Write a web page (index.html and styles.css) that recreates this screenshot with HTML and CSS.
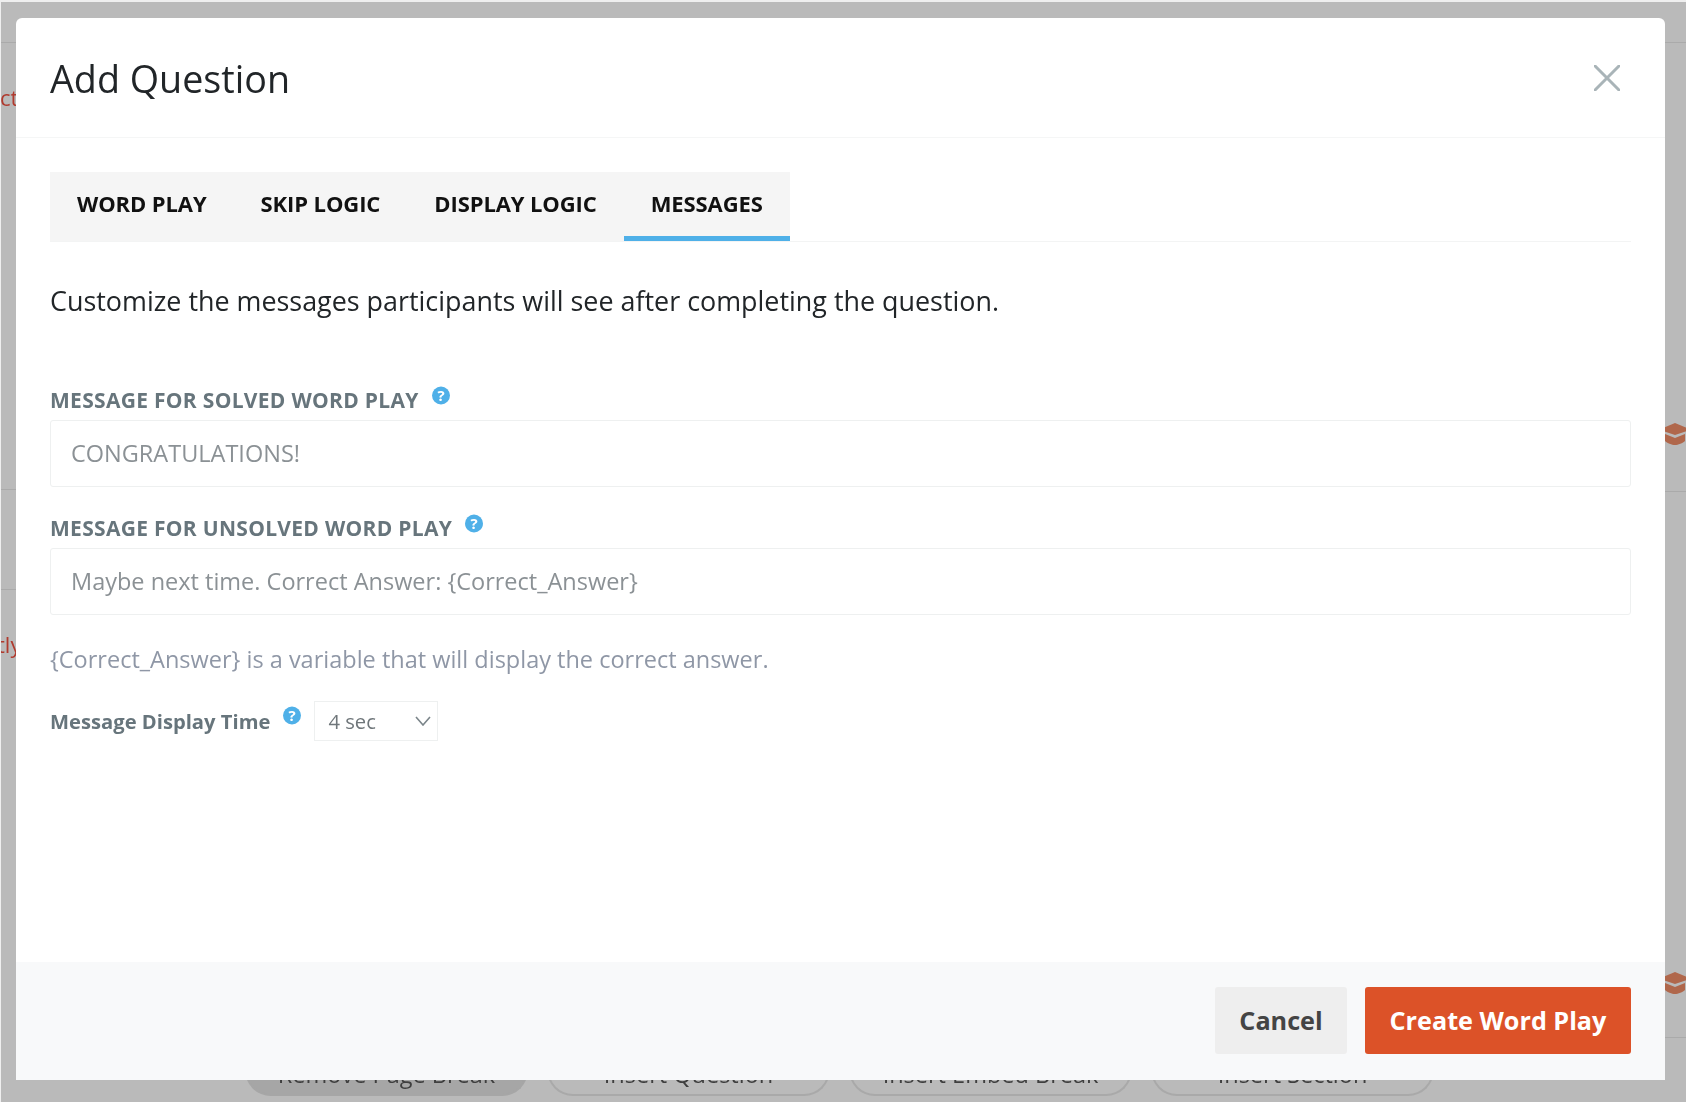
FILE: index.html
```html
<!DOCTYPE html>
<html lang="en">
<head>
<meta charset="utf-8">
<title>Add Question</title>
<link rel="stylesheet" href="styles.css">
</head>
<body>
<div class="backdrop">
  <span class="rule rule-top"></span>
  <span class="rule rule-left-a"></span>
  <span class="rule rule-left-b"></span>
  <span class="rule rule-right-a"></span>
  <span class="rule rule-right-b"></span>
  <span class="rule rule-right-c"></span>
  <span class="peek peek-a">ct</span>
  <span class="peek peek-b">tly</span>
  <svg class="cap cap-a" viewBox="0 0 24 22"><path d="M12 0 24 5v3L12 12 0 8V5z"/><path d="M2 11l10 4 10-4v7c-2 2-7 4-10 4s-8-2-10-4z"/></svg>
  <svg class="cap cap-b" viewBox="0 0 24 22"><path d="M12 0 24 5v3L12 12 0 8V5z"/><path d="M2 11l10 4 10-4v7c-2 2-7 4-10 4s-8-2-10-4z"/></svg>
  <div class="page-actions">
    <span class="page-btn is-dark">Remove Page Break</span>
    <span class="page-btn">Insert Question</span>
    <span class="page-btn">Insert Embed Break</span>
    <span class="page-btn">Insert Section</span>
  </div>
</div>

<div class="modal">
  <header class="modal-head">
    <h1 class="modal-title">Add Question</h1>
    <svg class="close" viewBox="0 0 26 26"><path d="M1 1 25 25M25 1 1 25"/></svg>
  </header>
  <main class="modal-body">
    <nav class="tabs-line">
      <div class="tabs">
        <span class="tab">WORD PLAY</span>
        <span class="tab">SKIP LOGIC</span>
        <span class="tab">DISPLAY LOGIC</span>
        <span class="tab is-active">MESSAGES</span>
      </div>
    </nav>
    <p class="intro">Customize the messages participants will see after completing the question.</p>
    <div class="field field-first">
      <div class="field-label">MESSAGE FOR SOLVED WORD PLAY
        <svg class="help" viewBox="0 0 18 18"><circle cx="9" cy="9" r="9"/><text x="9" y="14.2">?</text></svg>
      </div>
      <div class="input">CONGRATULATIONS!</div>
    </div>
    <div class="field">
      <div class="field-label">MESSAGE FOR UNSOLVED WORD PLAY
        <svg class="help" viewBox="0 0 18 18"><circle cx="9" cy="9" r="9"/><text x="9" y="14.2">?</text></svg>
      </div>
      <div class="input">Maybe next time. Correct Answer: {Correct_Answer}</div>
    </div>
    <p class="hint">{Correct_Answer} is a variable that will display the correct answer.</p>
    <div class="time-row">
      <span class="time-label">Message Display Time</span>
      <svg class="help help-time" viewBox="0 0 18 18"><circle cx="9" cy="9" r="9"/><text x="9" y="14.2">?</text></svg>
      <div class="select">4 sec
        <svg class="chevron" viewBox="0 0 16 10"><path d="M1 1 8 9 15 1"/></svg>
      </div>
    </div>
  </main>
  <footer class="modal-foot">
    <button class="btn btn-cancel" type="button">Cancel</button>
    <button class="btn btn-create" type="button">Create Word Play</button>
  </footer>
</div>
</body>
</html>
```
FILE: styles.css
```css
* { box-sizing: border-box; }
html, body { margin: 0; height: 100%; }
body {
  position: relative;
  width: 1686px;
  height: 1102px;
  overflow: hidden;
  background: #bababa;
  font-family: "Open Sans", "Liberation Sans", sans-serif;
  border-top: 2px solid #efefef;
  border-left: 1px solid #efefef;
}

/* Dimmed page behind the dialog */
.backdrop { position: absolute; inset: 0; filter: blur(0.5px); }
.rule { position: absolute; height: 1px; background: #aaaaaa; }
.rule-top { left: 0; width: 16px; top: 40px; }
.rule-left-a { left: 0; width: 16px; top: 487px; }
.rule-left-b { left: 0; width: 16px; top: 587px; }
.rule-right-a { left: 1664px; right: 0; top: 40px; }
.rule-right-b { left: 1664px; right: 0; top: 489px; }
.rule-right-c { left: 1664px; right: 0; top: 1035px; }
.peek { position: absolute; color: #b03a2e; font-size: 22px; line-height: 30px; }
.peek-a { left: -1px; top: 80px; }
.peek-b { left: -4px; top: 627px; }
.cap { position: absolute; left: 1662px; width: 24px; height: 22px; fill: #b0674b; }
.cap-a { top: 421px; }
.cap-b { top: 970px; }
.page-actions {
  position: absolute;
  left: 244px;
  top: 1040px;
  display: flex;
  gap: 19px;
}
.page-btn {
  width: 283px;
  height: 54px;
  padding-top: 15px;
  border: 2px solid #a9a9a9;
  border-radius: 0 0 26px 26px;
  border-top: 0;
  color: #3f3f3f;
  font-size: 23.5px;
  line-height: 34px;
  text-align: center;
}
.is-dark { background: #a6a6a6; border-color: #a6a6a6; }

/* Dialog */
.modal {
  position: absolute;
  left: 15px;
  top: 16px;
  width: 1649px;
  height: 1062px;
  display: flex;
  flex-direction: column;
  background: #fff;
  border-radius: 6px 6px 0 0;
  overflow: hidden;
  filter: blur(0.4px);
}
.modal-head {
  height: 120px;
  flex: none;
  display: flex;
  align-items: center;
  justify-content: space-between;
  padding: 0 45px 0 34px;
  border-bottom: 1px solid #f5f6f6;
}
.modal-title { margin: 0; padding-top: 2px; font-size: 37.7px; font-weight: 400; color: #212528; line-height: 48px; }
.close { width: 26px; height: 26px; fill: none; stroke: #a9b4b8; stroke-width: 3; stroke-linecap: round; }

.modal-body { flex: 1; padding: 34px 34px 0 34px; }
.tabs-line { border-bottom: 1px solid #f3f4f4; }
.tabs { display: inline-flex; background: #f5f5f5; height: 69px; vertical-align: top; }
.tab {
  padding: 0 27px;
  color: #111;
  font-size: 22px;
  font-weight: 700;
  line-height: 62px;
  letter-spacing: -0.1px;
  border-bottom: 5px solid transparent;
}
.is-active { border-bottom-color: #4fb0e8; }
.intro { margin: 37px 0 0; color: #212528; font-size: 26.9px; line-height: 44px; }

.field { margin-top: 19px; }
.field-first { margin-top: 55px; }
.field-label {
  display: flex;
  align-items: flex-start;
  height: 42px;
  padding-top: 8px;
  color: #67757c;
  font-size: 21px;
  font-weight: 700;
  line-height: 29px;
  letter-spacing: 0.3px;
}
.help { width: 18px; height: 19px; flex: none; margin: 0 0 0 13px; }
.help circle { fill: #4fb0e8; }
.help text { fill: #fff; font-size: 15px; font-weight: 700; text-anchor: middle; letter-spacing: 0; }
.input {
  height: 67px;
  padding: 0 20px;
  border: 1px solid #eef0f0;
  border-radius: 3px;
  color: #8b9195;
  font-size: 23.5px;
  line-height: 65px;
}
.hint { margin: 26px 0 0; color: #8f97a6; font-size: 23.5px; line-height: 36px; }
.time-row { display: flex; align-items: center; margin-top: 24px; height: 40px; }
.time-label { color: #67757c; font-size: 20.2px; font-weight: 700; line-height: 38px; }
.help-time { margin: -12px 0 0 13px; }
.select {
  position: relative;
  width: 124px;
  height: 40px;
  margin-left: 13px;
  padding-left: 13px;
  border: 1px solid #eef0f0;
  color: #6f767a;
  font-size: 20.2px;
  line-height: 39px;
}
.chevron { position: absolute; right: 6px; top: 14px; width: 16px; height: 10px; fill: none; stroke: #7b858a; stroke-width: 1.6; }

.modal-foot {
  height: 118px;
  flex: none;
  display: flex;
  justify-content: flex-end;
  align-items: flex-start;
  gap: 18px;
  padding: 25px 34px 0 0;
  background: #f8f9fa;
}
.btn {
  height: 67px;
  padding: 0 0 2px;
  border: 0;
  border-radius: 3px;
  font-family: inherit;
  font-size: 25.2px;
  font-weight: 700;
}
.btn-cancel { width: 132px; background: #eeeeee; color: #444; }
.btn-create { width: 266px; background: #dc5228; color: #fff; }
```
